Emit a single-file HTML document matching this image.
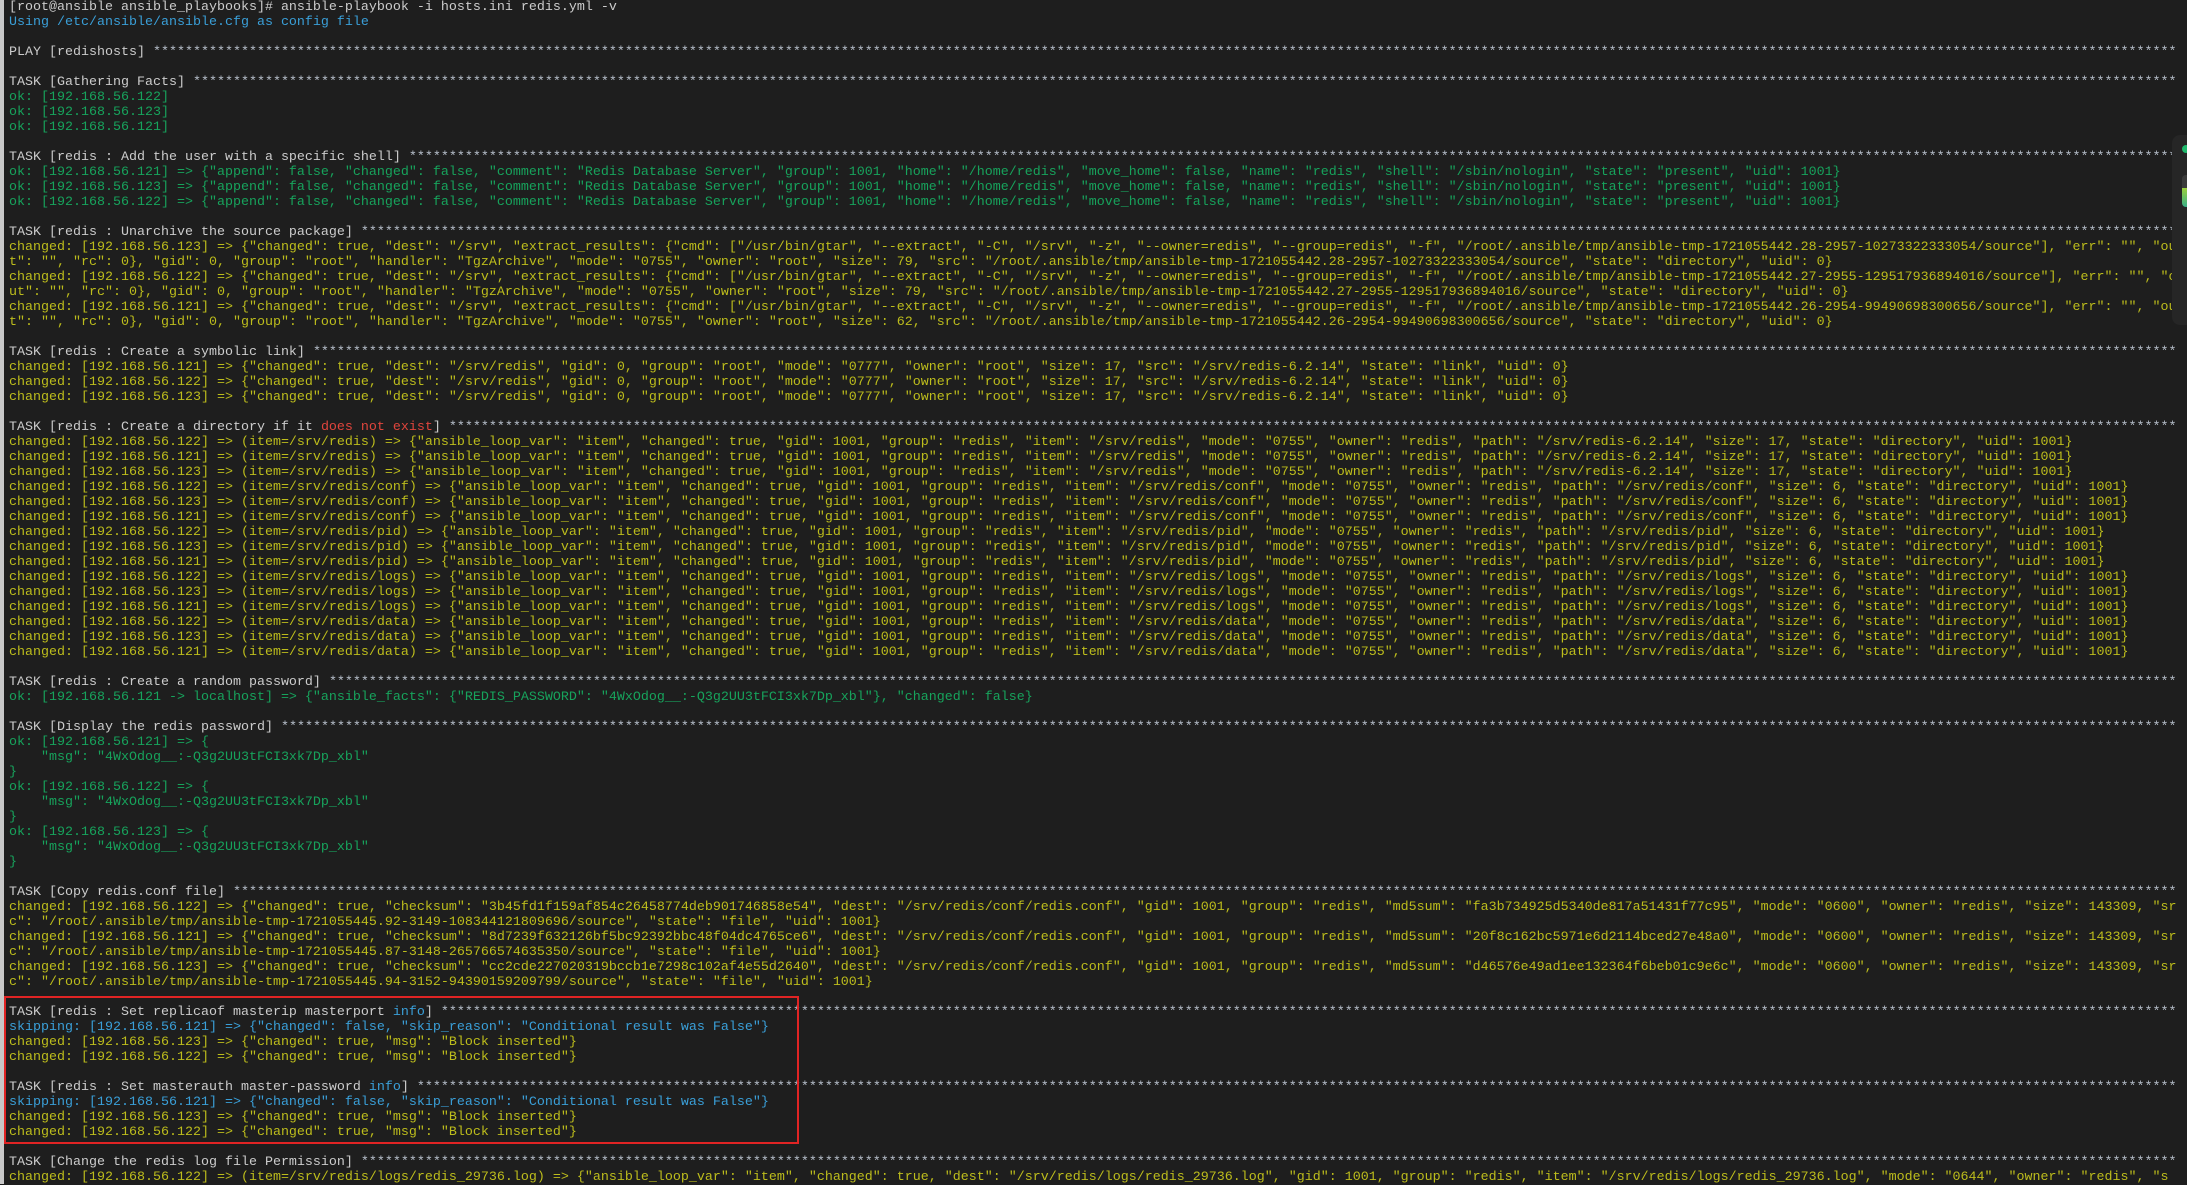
<!DOCTYPE html>
<html><head><meta charset="utf-8">
<style>
html,body{margin:0;padding:0;background:#1e1e1e;width:2187px;height:1184px;overflow:hidden;}
#bar{position:absolute;left:0;top:0;width:4px;height:1184px;background:#c8c8c8;}
#t{position:absolute;left:9px;top:0;width:2172px;overflow:hidden;font-family:"Liberation Mono",monospace;font-size:13.33px;line-height:15px;color:#cccccc;}
#t div{white-space:pre;height:15px;overflow:hidden;}
.h{width:2168px;}
.s{color:#b8c0cc}
.y{color:#bdbd1c}
.g{color:#17a35c}
.c{color:#3a9fd8}
.r{color:#e0453c}
#box{position:absolute;left:4px;top:996px;width:791px;height:144px;border:2px solid #e02424;}
#wid{position:absolute;left:2172px;top:135px;width:20px;height:190px;background:#262626;border-radius:8px 0 0 8px;}
#wid .dot{position:absolute;left:10px;top:10px;width:8px;height:8px;border-radius:50%;background:#1fb86b;}
#wid .bat{position:absolute;left:10px;top:40px;width:10px;height:32px;border-radius:4px;background:linear-gradient(#3a3a3a 40%,#9ccf3a 40%,#3ab08a);}
</style></head><body>
<div id="bar"></div>
<div id="t">
<div>[root@ansible ansible_playbooks]# ansible-playbook -i hosts.ini redis.yml -v</div>
<div class="c">Using /etc/ansible/ansible.cfg as config file</div>
<div></div>
<div class="h">PLAY [redishosts] <span class="s">************************************************************************************************************************************************************************************************************************************************************************************************</span></div>
<div></div>
<div class="h">TASK [Gathering Facts] <span class="s">************************************************************************************************************************************************************************************************************************************************************************************************</span></div>
<div class="g">ok: [192.168.56.122]</div>
<div class="g">ok: [192.168.56.123]</div>
<div class="g">ok: [192.168.56.121]</div>
<div></div>
<div class="h">TASK [redis : Add the user with a specific shell] <span class="s">************************************************************************************************************************************************************************************************************************************************************************************************</span></div>
<div class="g">ok: [192.168.56.121] =&gt; {"append": false, "changed": false, "comment": "Redis Database Server", "group": 1001, "home": "/home/redis", "move_home": false, "name": "redis", "shell": "/sbin/nologin", "state": "present", "uid": 1001}</div>
<div class="g">ok: [192.168.56.123] =&gt; {"append": false, "changed": false, "comment": "Redis Database Server", "group": 1001, "home": "/home/redis", "move_home": false, "name": "redis", "shell": "/sbin/nologin", "state": "present", "uid": 1001}</div>
<div class="g">ok: [192.168.56.122] =&gt; {"append": false, "changed": false, "comment": "Redis Database Server", "group": 1001, "home": "/home/redis", "move_home": false, "name": "redis", "shell": "/sbin/nologin", "state": "present", "uid": 1001}</div>
<div></div>
<div class="h">TASK [redis : Unarchive the source package] <span class="s">************************************************************************************************************************************************************************************************************************************************************************************************</span></div>
<div class="y h">changed: [192.168.56.123] =&gt; {"changed": true, "dest": "/srv", "extract_results": {"cmd": ["/usr/bin/gtar", "--extract", "-C", "/srv", "-z", "--owner=redis", "--group=redis", "-f", "/root/.ansible/tmp/ansible-tmp-1721055442.28-2957-10273322333054/source"], "err": "", "ou</div>
<div class="y">t": "", "rc": 0}, "gid": 0, "group": "root", "handler": "TgzArchive", "mode": "0755", "owner": "root", "size": 79, "src": "/root/.ansible/tmp/ansible-tmp-1721055442.28-2957-10273322333054/source", "state": "directory", "uid": 0}</div>
<div class="y h">changed: [192.168.56.122] =&gt; {"changed": true, "dest": "/srv", "extract_results": {"cmd": ["/usr/bin/gtar", "--extract", "-C", "/srv", "-z", "--owner=redis", "--group=redis", "-f", "/root/.ansible/tmp/ansible-tmp-1721055442.27-2955-129517936894016/source"], "err": "", "o</div>
<div class="y">ut": "", "rc": 0}, "gid": 0, "group": "root", "handler": "TgzArchive", "mode": "0755", "owner": "root", "size": 79, "src": "/root/.ansible/tmp/ansible-tmp-1721055442.27-2955-129517936894016/source", "state": "directory", "uid": 0}</div>
<div class="y h">changed: [192.168.56.121] =&gt; {"changed": true, "dest": "/srv", "extract_results": {"cmd": ["/usr/bin/gtar", "--extract", "-C", "/srv", "-z", "--owner=redis", "--group=redis", "-f", "/root/.ansible/tmp/ansible-tmp-1721055442.26-2954-99490698300656/source"], "err": "", "ou</div>
<div class="y">t": "", "rc": 0}, "gid": 0, "group": "root", "handler": "TgzArchive", "mode": "0755", "owner": "root", "size": 62, "src": "/root/.ansible/tmp/ansible-tmp-1721055442.26-2954-99490698300656/source", "state": "directory", "uid": 0}</div>
<div></div>
<div class="h">TASK [redis : Create a symbolic link] <span class="s">************************************************************************************************************************************************************************************************************************************************************************************************</span></div>
<div class="y">changed: [192.168.56.121] =&gt; {"changed": true, "dest": "/srv/redis", "gid": 0, "group": "root", "mode": "0777", "owner": "root", "size": 17, "src": "/srv/redis-6.2.14", "state": "link", "uid": 0}</div>
<div class="y">changed: [192.168.56.122] =&gt; {"changed": true, "dest": "/srv/redis", "gid": 0, "group": "root", "mode": "0777", "owner": "root", "size": 17, "src": "/srv/redis-6.2.14", "state": "link", "uid": 0}</div>
<div class="y">changed: [192.168.56.123] =&gt; {"changed": true, "dest": "/srv/redis", "gid": 0, "group": "root", "mode": "0777", "owner": "root", "size": 17, "src": "/srv/redis-6.2.14", "state": "link", "uid": 0}</div>
<div></div>
<div class="h">TASK [redis : Create a directory if it <span class="r">does not exist</span>] <span class="s">************************************************************************************************************************************************************************************************************************************************************************************************</span></div>
<div class="y">changed: [192.168.56.122] =&gt; (item=/srv/redis) =&gt; {"ansible_loop_var": "item", "changed": true, "gid": 1001, "group": "redis", "item": "/srv/redis", "mode": "0755", "owner": "redis", "path": "/srv/redis-6.2.14", "size": 17, "state": "directory", "uid": 1001}</div>
<div class="y">changed: [192.168.56.121] =&gt; (item=/srv/redis) =&gt; {"ansible_loop_var": "item", "changed": true, "gid": 1001, "group": "redis", "item": "/srv/redis", "mode": "0755", "owner": "redis", "path": "/srv/redis-6.2.14", "size": 17, "state": "directory", "uid": 1001}</div>
<div class="y">changed: [192.168.56.123] =&gt; (item=/srv/redis) =&gt; {"ansible_loop_var": "item", "changed": true, "gid": 1001, "group": "redis", "item": "/srv/redis", "mode": "0755", "owner": "redis", "path": "/srv/redis-6.2.14", "size": 17, "state": "directory", "uid": 1001}</div>
<div class="y">changed: [192.168.56.122] =&gt; (item=/srv/redis/conf) =&gt; {"ansible_loop_var": "item", "changed": true, "gid": 1001, "group": "redis", "item": "/srv/redis/conf", "mode": "0755", "owner": "redis", "path": "/srv/redis/conf", "size": 6, "state": "directory", "uid": 1001}</div>
<div class="y">changed: [192.168.56.123] =&gt; (item=/srv/redis/conf) =&gt; {"ansible_loop_var": "item", "changed": true, "gid": 1001, "group": "redis", "item": "/srv/redis/conf", "mode": "0755", "owner": "redis", "path": "/srv/redis/conf", "size": 6, "state": "directory", "uid": 1001}</div>
<div class="y">changed: [192.168.56.121] =&gt; (item=/srv/redis/conf) =&gt; {"ansible_loop_var": "item", "changed": true, "gid": 1001, "group": "redis", "item": "/srv/redis/conf", "mode": "0755", "owner": "redis", "path": "/srv/redis/conf", "size": 6, "state": "directory", "uid": 1001}</div>
<div class="y">changed: [192.168.56.122] =&gt; (item=/srv/redis/pid) =&gt; {"ansible_loop_var": "item", "changed": true, "gid": 1001, "group": "redis", "item": "/srv/redis/pid", "mode": "0755", "owner": "redis", "path": "/srv/redis/pid", "size": 6, "state": "directory", "uid": 1001}</div>
<div class="y">changed: [192.168.56.123] =&gt; (item=/srv/redis/pid) =&gt; {"ansible_loop_var": "item", "changed": true, "gid": 1001, "group": "redis", "item": "/srv/redis/pid", "mode": "0755", "owner": "redis", "path": "/srv/redis/pid", "size": 6, "state": "directory", "uid": 1001}</div>
<div class="y">changed: [192.168.56.121] =&gt; (item=/srv/redis/pid) =&gt; {"ansible_loop_var": "item", "changed": true, "gid": 1001, "group": "redis", "item": "/srv/redis/pid", "mode": "0755", "owner": "redis", "path": "/srv/redis/pid", "size": 6, "state": "directory", "uid": 1001}</div>
<div class="y">changed: [192.168.56.122] =&gt; (item=/srv/redis/logs) =&gt; {"ansible_loop_var": "item", "changed": true, "gid": 1001, "group": "redis", "item": "/srv/redis/logs", "mode": "0755", "owner": "redis", "path": "/srv/redis/logs", "size": 6, "state": "directory", "uid": 1001}</div>
<div class="y">changed: [192.168.56.123] =&gt; (item=/srv/redis/logs) =&gt; {"ansible_loop_var": "item", "changed": true, "gid": 1001, "group": "redis", "item": "/srv/redis/logs", "mode": "0755", "owner": "redis", "path": "/srv/redis/logs", "size": 6, "state": "directory", "uid": 1001}</div>
<div class="y">changed: [192.168.56.121] =&gt; (item=/srv/redis/logs) =&gt; {"ansible_loop_var": "item", "changed": true, "gid": 1001, "group": "redis", "item": "/srv/redis/logs", "mode": "0755", "owner": "redis", "path": "/srv/redis/logs", "size": 6, "state": "directory", "uid": 1001}</div>
<div class="y">changed: [192.168.56.122] =&gt; (item=/srv/redis/data) =&gt; {"ansible_loop_var": "item", "changed": true, "gid": 1001, "group": "redis", "item": "/srv/redis/data", "mode": "0755", "owner": "redis", "path": "/srv/redis/data", "size": 6, "state": "directory", "uid": 1001}</div>
<div class="y">changed: [192.168.56.123] =&gt; (item=/srv/redis/data) =&gt; {"ansible_loop_var": "item", "changed": true, "gid": 1001, "group": "redis", "item": "/srv/redis/data", "mode": "0755", "owner": "redis", "path": "/srv/redis/data", "size": 6, "state": "directory", "uid": 1001}</div>
<div class="y">changed: [192.168.56.121] =&gt; (item=/srv/redis/data) =&gt; {"ansible_loop_var": "item", "changed": true, "gid": 1001, "group": "redis", "item": "/srv/redis/data", "mode": "0755", "owner": "redis", "path": "/srv/redis/data", "size": 6, "state": "directory", "uid": 1001}</div>
<div></div>
<div class="h">TASK [redis : Create a random password] <span class="s">************************************************************************************************************************************************************************************************************************************************************************************************</span></div>
<div class="g">ok: [192.168.56.121 -&gt; localhost] =&gt; {"ansible_facts": {"REDIS_PASSWORD": "4WxOdog__:-Q3g2UU3tFCI3xk7Dp_xbl"}, "changed": false}</div>
<div></div>
<div class="h">TASK [Display the redis password] <span class="s">************************************************************************************************************************************************************************************************************************************************************************************************</span></div>
<div class="g">ok: [192.168.56.121] =&gt; {</div>
<div class="g">    "msg": "4WxOdog__:-Q3g2UU3tFCI3xk7Dp_xbl"</div>
<div class="g">}</div>
<div class="g">ok: [192.168.56.122] =&gt; {</div>
<div class="g">    "msg": "4WxOdog__:-Q3g2UU3tFCI3xk7Dp_xbl"</div>
<div class="g">}</div>
<div class="g">ok: [192.168.56.123] =&gt; {</div>
<div class="g">    "msg": "4WxOdog__:-Q3g2UU3tFCI3xk7Dp_xbl"</div>
<div class="g">}</div>
<div></div>
<div class="h">TASK [Copy redis.conf file] <span class="s">************************************************************************************************************************************************************************************************************************************************************************************************</span></div>
<div class="y h">changed: [192.168.56.122] =&gt; {"changed": true, "checksum": "3b45fd1f159af854c26458774deb901746858e54", "dest": "/srv/redis/conf/redis.conf", "gid": 1001, "group": "redis", "md5sum": "fa3b734925d5340de817a51431f77c95", "mode": "0600", "owner": "redis", "size": 143309, "sr</div>
<div class="y">c": "/root/.ansible/tmp/ansible-tmp-1721055445.92-3149-108344121809696/source", "state": "file", "uid": 1001}</div>
<div class="y h">changed: [192.168.56.121] =&gt; {"changed": true, "checksum": "8d7239f632126bf5bc92392bbc48f04dc4765ce6", "dest": "/srv/redis/conf/redis.conf", "gid": 1001, "group": "redis", "md5sum": "20f8c162bc5971e6d2114bced27e48a0", "mode": "0600", "owner": "redis", "size": 143309, "sr</div>
<div class="y">c": "/root/.ansible/tmp/ansible-tmp-1721055445.87-3148-265766574635350/source", "state": "file", "uid": 1001}</div>
<div class="y h">changed: [192.168.56.123] =&gt; {"changed": true, "checksum": "cc2cde227020319bccb1e7298c102af4e55d2640", "dest": "/srv/redis/conf/redis.conf", "gid": 1001, "group": "redis", "md5sum": "d46576e49ad1ee132364f6beb01c9e6c", "mode": "0600", "owner": "redis", "size": 143309, "sr</div>
<div class="y">c": "/root/.ansible/tmp/ansible-tmp-1721055445.94-3152-94390159209799/source", "state": "file", "uid": 1001}</div>
<div></div>
<div class="h">TASK [redis : Set replicaof masterip masterport <span class="c">info</span>] <span class="s">************************************************************************************************************************************************************************************************************************************************************************************************</span></div>
<div class="c">skipping: [192.168.56.121] =&gt; {"changed": false, "skip_reason": "Conditional result was False"}</div>
<div class="y">changed: [192.168.56.123] =&gt; {"changed": true, "msg": "Block inserted"}</div>
<div class="y">changed: [192.168.56.122] =&gt; {"changed": true, "msg": "Block inserted"}</div>
<div></div>
<div class="h">TASK [redis : Set masterauth master-password <span class="c">info</span>] <span class="s">************************************************************************************************************************************************************************************************************************************************************************************************</span></div>
<div class="c">skipping: [192.168.56.121] =&gt; {"changed": false, "skip_reason": "Conditional result was False"}</div>
<div class="y">changed: [192.168.56.123] =&gt; {"changed": true, "msg": "Block inserted"}</div>
<div class="y">changed: [192.168.56.122] =&gt; {"changed": true, "msg": "Block inserted"}</div>
<div></div>
<div class="h">TASK [Change the redis log file Permission] <span class="s">************************************************************************************************************************************************************************************************************************************************************************************************</span></div>
<div class="y h">changed: [192.168.56.122] =&gt; (item=/srv/redis/logs/redis_29736.log) =&gt; {"ansible_loop_var": "item", "changed": true, "dest": "/srv/redis/logs/redis_29736.log", "gid": 1001, "group": "redis", "item": "/srv/redis/logs/redis_29736.log", "mode": "0644", "owner": "redis", "s</div>
</div>
<div id="box"></div>
<div id="wid"><div class="dot"></div><div class="bat"></div></div>
</body></html>
